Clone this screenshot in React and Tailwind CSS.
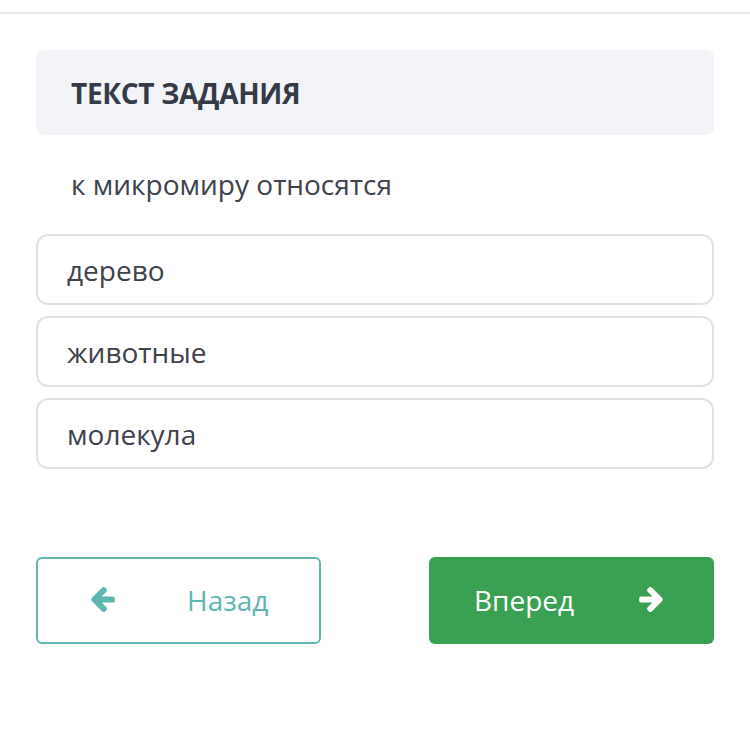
import React from "react";

const options = ["дерево", "животные", "молекула"];

// font awesome 4 style solid arrow
const Arrow = ({ className }) => (
  <svg viewBox="64 181 1472 1558" fill="currentColor" className={className}>
    <path d="M1536 896v128q0 53-32.5 90.5t-84.5 37.5h-704l293 294q38 36 38 90t-38 90l-75 76q-37 37-90 37-52 0-91-37l-651-652q-37-37-37-90 0-52 37-91l651-650q38-38 91-38 52 0 90 38l75 74q38 38 38 91t-38 91l-293 293h704q52 0 84.5 37.5t32.5 90.5z" />
  </svg>
);

const App = () => {
  return (
    <div className="min-h-[750px] bg-white font-['Open_Sans',sans-serif] pt-3">
      <div className="h-[2px] bg-[#e5e5e5]" />
      <div className="px-9 pt-[36px]">
        <div className="bg-[#f3f4f8] rounded-lg h-[85px] flex items-center px-[35px]">
          <h2 className="text-[28px] font-bold text-[#353b46] tracking-[-0.3px]">
            ТЕКСТ ЗАДАНИЯ
          </h2>
        </div>
        <p className="text-[28px] text-[#3d424b] px-[35px] pt-[31px] leading-[36px]">
          к микромиру относятся
        </p>
        <div className="flex flex-col gap-[11px] mt-[32px]">
          {options.map((option) => (
            <div
              key={option}
              className="h-[71px] border-2 border-[#e2e2e2] rounded-xl flex items-center px-[29px] text-[28px] text-[#3d424b]"
            >
              {option}
            </div>
          ))}
        </div>
        <div className="flex justify-between mt-[88px]">
          <button className="w-[285px] h-[87px] border-2 border-[#5db6b0] rounded-md flex items-center pl-[53px] pb-0.5 text-[#5db6b0] text-[28px]">
            <Arrow className="w-[24px] h-[25px]" />
            <span className="ml-[72px]">Назад</span>
          </button>
          <button className="w-[285px] h-[87px] bg-[#3ba152] rounded-md flex items-center pl-[45px] pb-0.5 text-white text-[28px]">
            <span>Вперед</span>
            <Arrow className="w-[24px] h-[25px] ml-[65px] -scale-x-100" />
          </button>
        </div>
      </div>
    </div>
  );
};

export default App;
